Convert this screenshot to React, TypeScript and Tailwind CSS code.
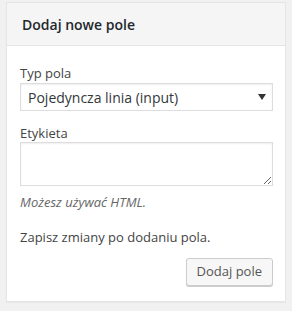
export default function App() {
  return (
    <div className="min-h-[311px] bg-[#f1f1f1] pt-[2px] pl-[6px] font-['Open_Sans',sans-serif] text-[13px] text-[#444]">
      <div className="w-[280px] border border-[#e5e5e5] bg-white shadow-[0_1px_1px_rgba(0,0,0,0.04)]">
        <div className="flex h-[43px] items-center border-b border-[#e5e5e5] bg-[#f5f5f5] pl-[15px]">
          <h2 className="text-[14px] font-semibold text-[#23282d]">Dodaj nowe pole</h2>
        </div>
        <div className="flex flex-col pt-[18px] pr-[12px] pb-[15px] pl-[13px]">
          <label className="leading-[18px]">Typ pola</label>
          <div className="relative mt-[1px]">
            <select className="h-[28px] w-full appearance-none border border-[#ddd] bg-white pl-[7px] text-[14px] text-[#32373c] shadow-[inset_0_1px_2px_rgba(0,0,0,0.07)] outline-none">
              <option>Pojedyncza linia (input)</option>
            </select>
            <svg className="pointer-events-none absolute top-[11px] right-[7px]" width="8" height="6" viewBox="0 0 8 6">
              <path d="M0 0h8L4 6z" fill="#333" />
            </svg>
          </div>
          <label className="mt-[13px] leading-[18px]">Etykieta</label>
          <textarea className="h-[44px] w-full border border-[#ddd] bg-white px-2 text-[14px] shadow-[inset_0_1px_2px_rgba(0,0,0,0.07)] outline-none" />
          <p className="mt-[7px] leading-[18px] italic text-[#666]">Możesz używać HTML.</p>
          <p className="mt-[17px] leading-[18px]">Zapisz zmiany po dodaniu pola.</p>
          <div className="mt-[12px] flex justify-end">
            <button className="h-[28px] rounded-[3px] border border-[#ccc] bg-[#f7f7f7] px-[10px] text-[13px] text-[#555] shadow-[0_1px_0_#ccc]">
              Dodaj pole
            </button>
          </div>
        </div>
      </div>
    </div>
  );
}
